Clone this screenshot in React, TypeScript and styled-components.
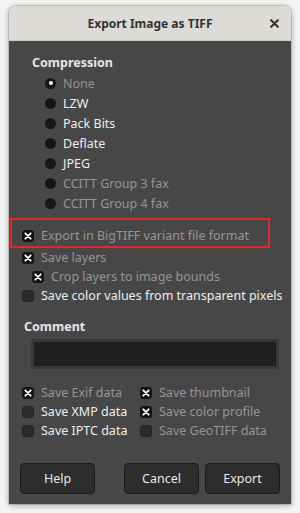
import React from 'react';
import styled, { createGlobalStyle } from 'styled-components';

const GlobalStyle = createGlobalStyle`
  html, body {
    margin: 0;
    padding: 0;
    background: #f4f4f4;
  }
  body {
    font-family: "Noto Sans", "DejaVu Sans", sans-serif;
    font-size: 12.5px;
  }
`;

const Page = styled.div`
  width: 300px;
  height: 513px;
  box-sizing: border-box;
  padding: 6px 9px 9px;
  display: flex;
`;

const Window = styled.div`
  flex: 1;
  display: flex;
  flex-direction: column;
  border-radius: 7px 7px 0 0;
  overflow: hidden;
  box-shadow: 0 1px 6px rgba(0, 0, 0, 0.35), 0 0 0 1px rgba(0, 0, 0, 0.12);
`;

const TitleBar = styled.div`
  height: 34px;
  flex: none;
  background: #dedbd7;
  border-bottom: 1px solid #cfcbc6;
  display: flex;
  align-items: center;
  justify-content: center;
  position: relative;
  color: #2e3436;
  font-weight: 700;
  font-size: 12px;
`;

const CloseButton = styled.span`
  position: absolute;
  right: 12px;
  top: 13px;
  width: 9px;
  height: 9px;
  display: flex;
`;

const Body = styled.div`
  flex: 1;
  background: #474747;
  display: flex;
  flex-direction: column;
  padding-top: 13px;
`;

const Heading = styled.div<{ $indent: number }>`
  height: 18px;
  line-height: 18px;
  padding-left: ${(p) => p.$indent}px;
  font-weight: 700;
  color: #e4e8ee;
`;

const RadioList = styled.div`
  display: flex;
  flex-direction: column;
  padding-left: 36px;
  margin-top: 1px;
`;

const Row = styled.label<{ $height?: number; $indent?: number }>`
  height: ${(p) => p.$height ?? 20}px;
  display: flex;
  align-items: center;
  gap: 7px;
  padding-left: ${(p) => p.$indent ?? 0}px;
  white-space: nowrap;
`;

const RadioDot = styled.span<{ $checked?: boolean }>`
  width: 11px;
  height: 11px;
  border-radius: 50%;
  background: #161616;
  flex: none;
  display: flex;
  align-items: center;
  justify-content: center;
  &::after {
    content: '';
    width: 4px;
    height: 4px;
    border-radius: 50%;
    background: ${(p) => (p.$checked ? '#ffffff' : 'transparent')};
  }
`;

const Label = styled.span<{ $disabled?: boolean }>`
  color: ${(p) => (p.$disabled ? '#959595' : '#eeeeee')};
`;

const OptionsGroup = styled.div`
  display: flex;
  flex-direction: column;
  margin-top: 5px;
`;

const Highlight = styled.div`
  width: 260px;
  margin-left: 1px;
  box-sizing: border-box;
  border: 2px solid #e3262a;
  padding: 6px 0 0 10px;
  height: 30px;
`;

const OptionRows = styled.div`
  display: flex;
  flex-direction: column;
  padding-left: 13px;
`;

const Box = styled.span<{ $checked?: boolean }>`
  width: 12px;
  height: 12px;
  box-sizing: border-box;
  border-radius: 3px;
  flex: none;
  display: flex;
  align-items: center;
  justify-content: center;
  background: ${(p) => (p.$checked ? '#141414' : '#2b2b2b')};
  border: 1px solid ${(p) => (p.$checked ? '#141414' : '#242424')};
`;

const CommentSection = styled.div`
  display: flex;
  flex-direction: column;
  margin-top: 13px;
`;

const CommentField = styled.div`
  margin: 3px 12px 0 22px;
  height: 30px;
  box-sizing: border-box;
  border: 3px solid #393939;
  background: #1f1f1f;
`;

const MetaGrid = styled.div`
  display: grid;
  grid-template-columns: 118px auto;
  grid-auto-rows: 19px;
  padding-left: 13px;
  margin-top: 14px;
`;

const ButtonBar = styled.div`
  display: flex;
  padding: 0 11px 0 11px;
  margin-top: auto;
  margin-bottom: 10px;
`;

const Button = styled.button<{ $push?: boolean }>`
  width: 75px;
  height: 31px;
  box-sizing: border-box;
  background: #2d2d2d;
  border: 1px solid #1c1c1c;
  border-radius: 4px;
  color: #e6e9ee;
  font-family: inherit;
  font-size: 12.5px;
  margin-left: ${(p) => (p.$push ? 'auto' : '6px')};
  &:first-child {
    margin-left: 0;
  }
`;

const Cross = () => (
  <svg width="8" height="8" viewBox="0 0 8 8">
    <path d="M1.3 1.3 L6.7 6.7 M6.7 1.3 L1.3 6.7" stroke="#ffffff" strokeWidth="1.8" strokeLinecap="round" />
  </svg>
);

const Check = ({ checked, disabled, label, indent }: { checked?: boolean; disabled?: boolean; label: string; indent?: number }) => (
  <Row $height={19} $indent={indent}>
    <Box $checked={checked}>{checked && <Cross />}</Box>
    <Label $disabled={disabled}>{label}</Label>
  </Row>
);

const compression = [
  { label: 'None', checked: true, disabled: true },
  { label: 'LZW' },
  { label: 'Pack Bits' },
  { label: 'Deflate' },
  { label: 'JPEG' },
  { label: 'CCITT Group 3 fax', disabled: true },
  { label: 'CCITT Group 4 fax', disabled: true },
];

const meta = [
  { label: 'Save Exif data', checked: true, disabled: true },
  { label: 'Save thumbnail', checked: true, disabled: true },
  { label: 'Save XMP data' },
  { label: 'Save color profile', checked: true, disabled: true },
  { label: 'Save IPTC data' },
  { label: 'Save GeoTIFF data', disabled: true },
];

export default function App() {
  return (
    <>
      <GlobalStyle />
      <Page>
        <Window>
          <TitleBar>
            Export Image as TIFF
            <CloseButton>
              <svg width="9" height="9" viewBox="0 0 9 9">
                <path d="M1.2 1.2 L7.8 7.8 M7.8 1.2 L1.2 7.8" stroke="#2e3436" strokeWidth="2.1" strokeLinecap="round" />
              </svg>
            </CloseButton>
          </TitleBar>
          <Body>
            <Heading $indent={23}>Compression</Heading>
            <RadioList>
              {compression.map((c) => (
                <Row key={c.label}>
                  <RadioDot $checked={c.checked} />
                  <Label $disabled={c.disabled}>{c.label}</Label>
                </Row>
              ))}
            </RadioList>
            <OptionsGroup>
              <Highlight>
                <Check checked disabled label="Export in BigTIFF variant file format" />
              </Highlight>
              <OptionRows>
                <Check checked disabled label="Save layers" />
                <Check checked disabled label="Crop layers to image bounds" indent={10} />
                <Check label="Save color values from transparent pixels" />
              </OptionRows>
            </OptionsGroup>
            <CommentSection>
              <Heading $indent={15}>Comment</Heading>
              <CommentField />
            </CommentSection>
            <MetaGrid>
              {meta.map((m) => (
                <Check key={m.label} checked={m.checked} disabled={m.disabled} label={m.label} />
              ))}
            </MetaGrid>
            <ButtonBar>
              <Button>Help</Button>
              <Button $push>Cancel</Button>
              <Button>Export</Button>
            </ButtonBar>
          </Body>
        </Window>
      </Page>
    </>
  );
}
